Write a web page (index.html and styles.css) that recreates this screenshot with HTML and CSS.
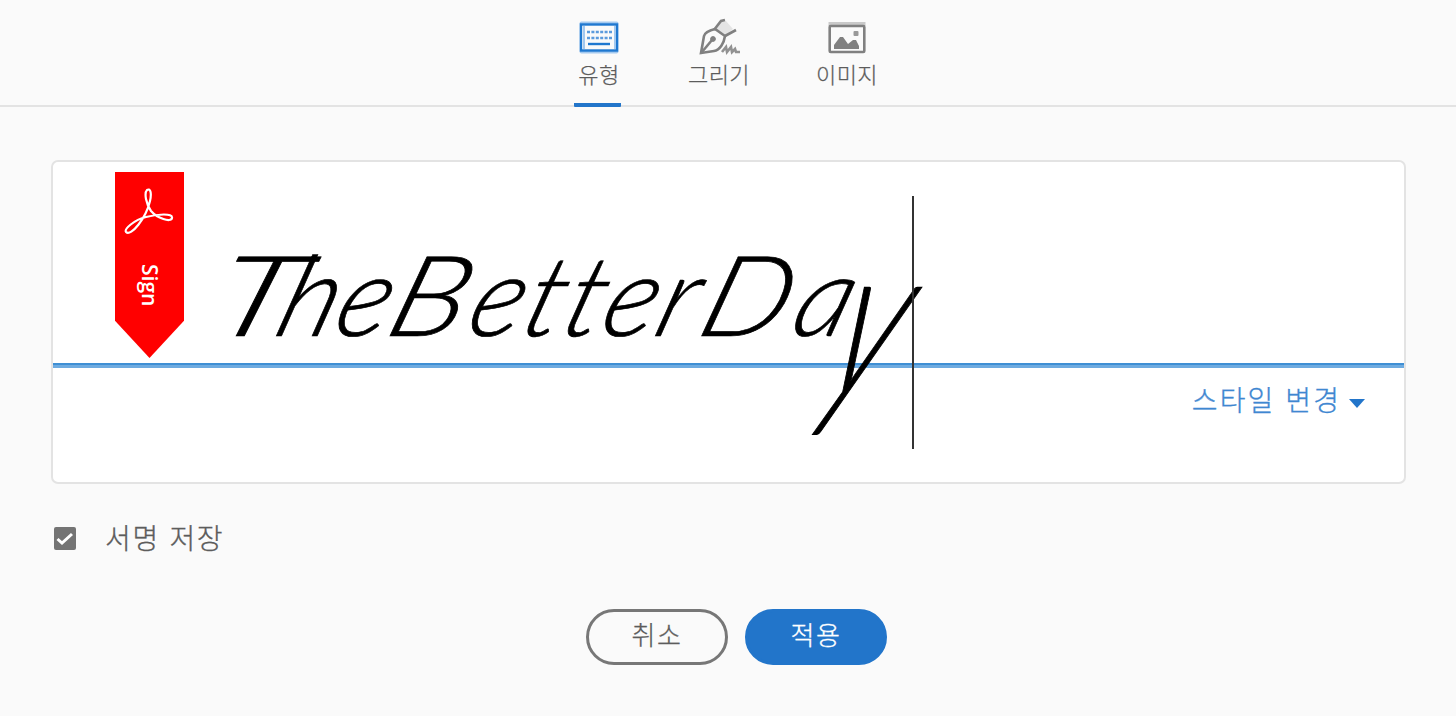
FILE: index.html
```html
<!DOCTYPE html>
<html lang="ko">
<head>
<meta charset="utf-8">
<title>서명</title>
<link rel="stylesheet" href="styles.css">
</head>
<body>
<nav class="tabs">
  <div class="tab tab-type active">
    <svg width="40" height="34" viewBox="0 0 40 34"><rect x=".5" y="1.500" width="39" height="32" rx="2" fill="#a4c9ef"/><rect x="2" y="4.500" width="36" height="26" fill="#fafafa" stroke="#1f78d0" stroke-width="2.400"/><path d="M5 6v23M36 6v23" stroke="#a4c9ef" stroke-width="2"/><g stroke="#5b9bdd" stroke-width="2.400"><path d="M8 12h25M8 18h25" stroke-dasharray="3 1.400"/><path d="M9 24h22" stroke="#1f78d0"/></g></svg>
    <span>유형</span>
  </div>
  <div class="tab tab-draw">
    <svg width="44" height="38" viewBox="0 0 44 38" fill="none" stroke="#808080" stroke-width="2.600"><path d="M19 11L24 4L29 3L36 11L29 17Z" fill="#e4e4e4" stroke="none"/><path d="M4 35L7 18C8 14 14 12 18 11L28 18C27 25 23 32 17 33Z"/><path d="M5 34L15 22"/><circle cx="16" cy="21" r="2.400" fill="#808080" stroke-width="1"/><path d="M17 12L24 3L28 2M28 18L39 12"/><path d="M25 34L29 29L30 34L34 29L35 34L38 31L39 34H43" stroke-width="2.600" stroke="#929292"/></svg>
    <span>그리기</span>
  </div>
  <div class="tab tab-image">
    <svg width="38" height="34" viewBox="0 0 38 34"><rect x=".5" y="2" width="37" height="4" fill="#c9c9c9"/><rect x="1.700" y="6" width="34.600" height="26" fill="#fafafa" stroke="#808080" stroke-width="2.600" rx="1"/><path d="M6 29V25L12 17H15L20 24L25 20H28L31 26V29Z" fill="#808080"/><rect x="25.500" y="11" width="5" height="5" rx="1" fill="#999"/></svg>
    <span>이미지</span>
  </div>
</nav>
<main class="content">
  <section class="panel">
    <div class="writing">
      <div class="badge">
        <svg class="acrobat" width="52" height="52" viewBox="0 0 52 52" fill="none" stroke="#fff" stroke-width="2.200"><path d="M23 3C20 6 22 17 27 24C33 31 47 36 48 31C49 26 34 27 22 30C10 33 0 42 2 45C7 50 22 31 26 14C28 5 26 1 23 3Z"/></svg>
        <span class="badge-text">Sign</span>
      </div>
      <div class="signature"><span class="glyph wide-t">T</span><span class="glyph">h</span><span class="glyph">e</span><span class="glyph wide-b">B</span><span class="ette">ette</span><span class="glyph">r</span><span class="glyph wide-d">D</span><span class="glyph round-a">a</span><span class="glyph long-y">y</span></div>
      <div class="caret"></div>
    </div>
    <div class="style-row"><span>스타일 변경</span><i class="arrow"></i></div>
  </section>
  <label class="save">
    <svg width="22" height="23" viewBox="0 0 22 23"><rect width="22" height="23" rx="2" fill="#747474"/><path d="M3.500 12L8 16L18 7" fill="none" stroke="#fff" stroke-width="3"/></svg>
    <span>서명 저장</span>
  </label>
  <div class="actions">
    <button class="btn cancel">취소</button>
    <button class="btn apply">적용</button>
  </div>
</main>
</body>
</html>
```
FILE: styles.css
```css
* { box-sizing: border-box; }
body {
  margin: 0;
  height: 716px;
  overflow: hidden;
  background: #fafafa;
  color: #5c5c5c;
  font-family: "Liberation Sans", "Noto Sans CJK KR", sans-serif;
  font-weight: 400;
}
.tabs {
  display: flex;
  height: 107px;
  padding-left: 574px;
  border-bottom: 2px solid #e3e3e3;
}
.tab {
  display: flex;
  flex-direction: column;
  align-items: center;
  height: 107px;
  padding-top: 18px;
  font-size: 22px;
  font-weight: 300;
  line-height: 30px;
  letter-spacing: .5px;
  white-space: nowrap;
  -webkit-text-stroke: .25px currentColor;
}
.tab svg { height: 38px; margin-bottom: 5px; }
.tab-type { width: 47px; padding-left: 3px; }
.tab-draw { width: 62px; margin-left: 67px; }
.tab-image { width: 62px; margin-left: 66px; }
.active { border-bottom: 4px solid #2275ca; border-radius: 1px; }
.content { padding: 53px 50px 0 51px; }
.panel {
  height: 324px;
  background: #fff;
  border: 2px solid #e3e3e3;
  border-radius: 7px;
}
.writing {
  display: flex;
  height: 206px;
  padding: 10px 0 0 62px;
  background: linear-gradient(#3f8fd4 0 2px, #6eabe0 2px) 0 100% / 100% 5px no-repeat;
}
.badge {
  display: flex;
  flex-direction: column;
  align-items: center;
  flex: none;
  width: 69px;
  height: 186px;
  padding-top: 15px;
  background: #f00;
  clip-path: polygon(0 0, 100% 0, 100% 80%, 50% 100%, 0 80%);
}
.badge-text {
  margin-top: 25px;
  writing-mode: vertical-rl;
  color: #fff;
  font: 600 21px/26px "Open Sans", sans-serif;
}
/* Handwriting-style rendering of the typed name */
.signature {
  flex: none;
  width: 686px;
  height: 130px;
  margin: 61px 0 0 42px;
  color: #000;
  font: italic 300 112px/120px Lato, sans-serif;
  -webkit-text-stroke: .7px #000;
  white-space: nowrap;
  transform: skewX(-18deg);
  transform-origin: 0 100px;
}
.glyph { display: inline-block; transform-origin: 0 98px; }
.wide-t { margin: 0 9px 0 -22px; transform: scaleX(1.45); }
.wide-b { margin: 0 15px 0 0; transform: scaleX(1.15); }
.ette { letter-spacing: 2px; font-variant-ligatures: none; }
.wide-d { margin: 0 14px 0 7px; transform: scaleX(1.1); }
.round-a { margin-right: 0; }
.long-y { transform: translateY(2px) scale(1.2, 1.95) skewX(-5deg); transform-origin: 0 42px; }
.caret { position: relative; flex: none; width: 2px; height: 253px; margin-top: 24px; background: #333; }
.style-row {
  display: flex;
  justify-content: flex-end;
  align-items: center;
  height: 62px;
  padding-right: 39px;
  color: #3f87d1;
  font-size: 28px;
  font-weight: 300;
  letter-spacing: 2.100px;
  -webkit-text-stroke: .3px currentColor;
}
.arrow {
  margin: 8px 0 0 8px;
  border: 8px solid transparent;
  border-top: 9px solid #2275ca;
  border-bottom: 0;
}
.save {
  display: flex;
  align-items: center;
  gap: 29px;
  height: 40px;
  margin: 34px 0 0 3px;
  font-size: 28px;
  font-weight: 300;
  letter-spacing: 1.700px;
  -webkit-text-stroke: .3px currentColor;
}
.save span { margin-top: -3px; }
.actions { display: flex; gap: 17px; margin: 51px 0 0 535px; }
.btn {
  width: 142px;
  height: 56px;
  padding: 0 0 7px;
  border: 3px solid #777;
  border-radius: 28px;
  background: #fafafa;
  color: #5c5c5c;
  font: inherit;
  font-size: 26px;
  font-weight: 300;
  letter-spacing: 1.500px;
  -webkit-text-stroke: .3px currentColor;
}
.apply { background: #2275ca; border-color: #2275ca; color: #fff; }
```
